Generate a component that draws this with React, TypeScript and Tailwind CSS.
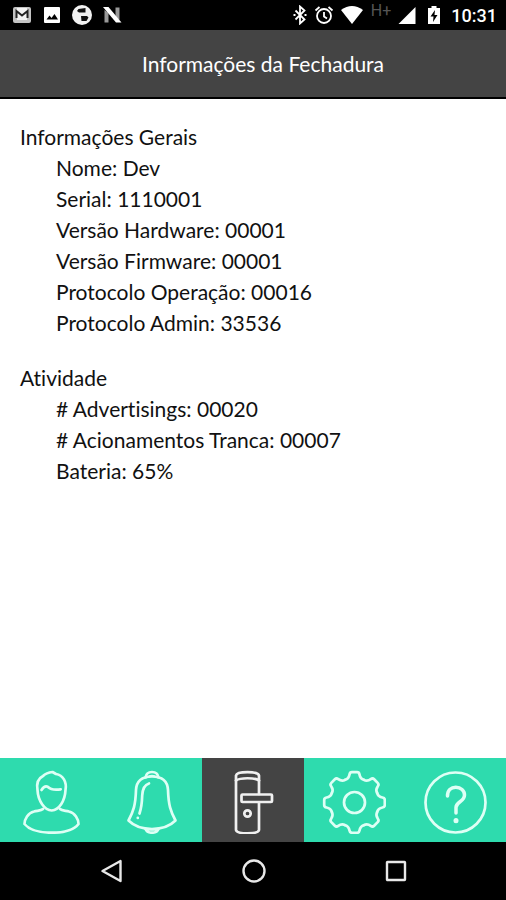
import React from 'react';

interface Field {
  label: string;
  value: string;
}

interface Section {
  title: string;
  fields: Field[];
}

const sections: Section[] = [
  {
    title: 'Informações Gerais',
    fields: [
      { label: 'Nome', value: 'Dev' },
      { label: 'Serial', value: '1110001' },
      { label: 'Versão Hardware', value: '00001' },
      { label: 'Versão Firmware', value: '00001' },
      { label: 'Protocolo Operação', value: '00016' },
      { label: 'Protocolo Admin', value: '33536' },
    ],
  },
  {
    title: 'Atividade',
    fields: [
      { label: '# Advertisings', value: '00020' },
      { label: '# Acionamentos Tranca', value: '00007' },
      { label: 'Bateria', value: '65%' },
    ],
  },
];

const StatusBar: React.FC = () => (
  <div className="flex h-[30px] items-center justify-between bg-black pl-3 pr-[9px] text-white">
    <div className="flex items-center gap-[10px]">
      <svg className="h-5 w-5" viewBox="0 0 20 20">
        <rect x="1" y="2" width="18" height="16" rx="2" fill="#c4c4c4" />
        <path d="M5 3h10v12H5z" fill="#f4f4f4" />
        <path d="M4.500 13V6L10 10.500 15.500 6v7" fill="none" stroke="#222" strokeWidth="2" />
      </svg>
      <svg className="h-5 w-5" viewBox="0 0 20 20">
        <rect x="2" y="2" width="16" height="16" rx="1" fill="#fff" />
        <path d="M4.500 14.500l3-4 2 2.500 3-4 3.500 5.500z" fill="#000" />
      </svg>
      <svg className="h-5 w-5" viewBox="0 0 20 20">
        <circle cx="10" cy="10" r="10" fill="#f2f2f2" />
        <path d="M6.500 4l7-1v4.500H7L5 6z" fill="#111" />
        <path d="M9 11h6l1.500 1.500-2 3.500H9.500z" fill="#111" />
      </svg>
      <svg className="h-5 w-5" viewBox="0 0 20 20">
        <path d="M2.500 5l4 3v9.500h-4zM13.500 2.500h4V15l-4-3z" fill="#999" />
        <path d="M1 2h5.500l13 15.500H14z" fill="#fff" />
      </svg>
    </div>
    <div className="flex items-center">
      <svg className="h-5 w-4" viewBox="0 0 16 20">
        <path d="M3.500 5.500l9 9L8 18.500V1.500l4.500 4-9 9" fill="none" stroke="#fff" strokeWidth="1.800" />
        <path d="M1.500 10h2M12.500 10h2" stroke="#fff" strokeWidth="1.800" />
      </svg>
      <svg className="ml-[6px] h-5 w-5" viewBox="0 0 20 20" fill="none" stroke="#fff" strokeWidth="1.800">
        <circle cx="10" cy="11" r="7" />
        <path d="M10 7v4.500l3 2M1.500 5.500l4-3.500M18.500 5.500l-4-3.500" />
      </svg>
      <svg className="ml-[7px] h-5 w-[22px]" viewBox="0 0 22 20">
        <path d="M0 5Q11-3 22 5L11 19z" fill="#fff" />
      </svg>
      <span className="ml-2 mb-2 font-['Roboto'] text-base leading-4 text-[#555]">H+</span>
      <svg className="ml-[6px] h-5 w-5" viewBox="0 0 20 20">
        <path d="M18.500 2v17h-17z" fill="#fff" />
      </svg>
      <svg className="ml-[10px] h-5 w-[14px]" viewBox="0 0 14 20">
        <path d="M1 3h3.500V1h5v2H13v16H1z" fill="#fff" />
        <path d="M8 5l-4.500 6.500h3L6 17l4.500-7h-3z" fill="#000" />
      </svg>
      <time className="ml-[10px] mt-[2px] font-['Roboto'] text-lg font-medium leading-5">10:31</time>
    </div>
  </div>
);

const ProfileIcon = () => (
  <>
    <path d="M33.500 2C29 2.500 26 4 24 6c-6 3-6.500 8-5.500 14 .5 11 7 20 14.200 20.500C40 40 46 31 46.500 20 48 12 44 5 37 4z" />
    <path d="M22.500 20c2-3 4-4.500 6.500-3 3 3 8 3 12.700 2.300" />
    <path d="M24 39c-2 2-6 1.500-9 2.500C9 43 5.500 49 5.500 54c5 6 16 8.700 27.200 8.700S55 60 59.500 54c0-5-3.500-11-9.500-12.500-3-1-7-.5-9-2.500" />
  </>
);

const BellIcon = () => (
  <>
    <path d="M25.500 7.500C26 4 28.500 2 32 2s6 2 6.500 5.500" />
    <path d="M28.500 7c1-2 6-2 7 0" strokeWidth="1.500" />
    <path d="M32 6.500C22 6.500 16.500 11 16 20c-.5 15-2.500 21-7.500 30.500C14 56 22 59 32 59s18-3 23.500-8.500C50.500 41 48.500 35 48 20 47.500 11 42 6.500 32 6.500z" />
    <path d="M25.500 59c1 2.500 3.500 3.700 6.500 3.700s5.500-1.200 6.500-3.700M28.500 59.500h7" />
    <path d="M29 13.500c-5 1.500-6.500 6-6.800 12-.2 7-1 13-2.700 18M17.800 47.800v.2" />
  </>
);

const LockIcon = () => (
  <>
    <path d="M38 24V5.500C37 1 16 1 15 5.500V60c1 4.500 22 4.500 23 0V33" />
    <path d="M15 10.500c4-3 19-3 23 0" />
    <rect x="20.500" y="24.500" width="30.500" height="7.500" rx="1" />
    <circle cx="26.500" cy="43.500" r="3.200" />
  </>
);

const GearIcon = () => (
  <g transform="translate(32.500 32.500)">
    {[0, 45, 90, 135, 180, 225, 270, 315].map((angle) => (
      <path
        key={angle}
        transform={`rotate(${angle})`}
        d="M-9.400-22.700C-6.500-23.500-5.500-25-5-28c.3-2 1-2.300 2.500-2.300h5C4-30.300 4.700-30 5-28c.5 3 1.500 4.500 4.400 5.300"
      />
    ))}
    <circle r="10.500" />
  </g>
);

const HelpIcon = () => (
  <>
    <circle cx="32.500" cy="32.500" r="30" />
    <path
      d="M24.500 26c0-5.500 3.500-8.700 8.300-8.700 5 0 8.700 3.200 8.700 7.700 0 7-8.500 6.500-8.500 12.500V43"
      strokeWidth="3.500"
    />
    <path d="M33 50.500v.2" strokeWidth="5" />
  </>
);

const tabs = [
  { name: 'Perfil', icon: ProfileIcon },
  { name: 'Notificações', icon: BellIcon },
  { name: 'Fechadura', icon: LockIcon, active: true },
  { name: 'Configurações', icon: GearIcon },
  { name: 'Ajuda', icon: HelpIcon },
];

const TabBar: React.FC = () => (
  <nav className="grid h-[84px] grid-cols-5 bg-[#2edbae]">
    {tabs.map(({ name, icon: Icon, active }) => (
      <button
        key={name}
        type="button"
        aria-label={name}
        aria-current={active ? 'page' : undefined}
        className={`flex items-end justify-center pb-2 ${active ? 'bg-[#444444] text-[#f0f0f0]' : 'text-[#defff5]'}`}
      >
        <svg
          className="h-16 w-16"
          viewBox="0 0 64 64"
          fill="none"
          stroke="currentColor"
          strokeWidth="2.700"
          strokeLinecap="round"
          strokeLinejoin="round"
        >
          <Icon />
        </svg>
      </button>
    ))}
  </nav>
);

const SystemBar: React.FC = () => (
  <div className="flex h-[58px] items-center justify-center gap-[118px] bg-black pl-[2px] text-[#e8e8e8]">
    <button type="button" aria-label="Voltar">
      <svg className="block h-6 w-6" viewBox="0 0 24 24" fill="none" stroke="currentColor" strokeWidth="2.400">
        <path d="M20.500 2v20L2.500 12z" strokeLinejoin="round" />
      </svg>
    </button>
    <button type="button" aria-label="Início">
      <svg className="block h-6 w-6" viewBox="0 0 24 24" fill="none" stroke="currentColor" strokeWidth="2.400">
        <circle cx="12" cy="12" r="10.500" />
      </svg>
    </button>
    <button type="button" aria-label="Recentes">
      <svg className="block h-6 w-6" viewBox="0 0 24 24" fill="none" stroke="currentColor" strokeWidth="2.400">
        <rect x="3" y="3" width="18" height="18" rx="0.500" />
      </svg>
    </button>
  </div>
);

export default function App() {
  return (
    <div className="flex min-h-screen flex-col bg-white font-['Lato',sans-serif] text-[21px] [font-variant-ligatures:none]">
      <StatusBar />
      <header className="flex h-[69px] items-center justify-center border-b-2 border-black bg-[#444444] pl-5">
        <h1 className="text-white">Informações da Fechadura</h1>
      </header>
      <main className="flex flex-1 flex-col gap-6 px-5 pt-[22px] leading-[31px] text-[#111111]">
        {sections.map((section) => (
          <section key={section.title}>
            <h2>{section.title}</h2>
            <ul className="pl-9">
              {section.fields.map((field) => (
                <li key={field.label}>
                  {field.label}: {field.value}
                </li>
              ))}
            </ul>
          </section>
        ))}
      </main>
      <TabBar />
      <SystemBar />
    </div>
  );
}
